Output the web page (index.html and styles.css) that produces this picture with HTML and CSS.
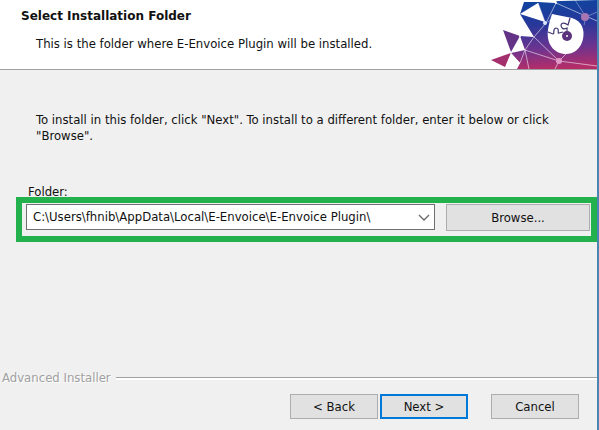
FILE: index.html
```html
<!DOCTYPE html>
<html lang="en">
<head>
<meta charset="UTF-8">
<title>E-Envoice Plugin Setup</title>
<link rel="stylesheet" href="styles.css">
</head>
<body>

<form class="wizard">
	<header class="banner">
		<div class="banner-text">
			<h1>Select Installation Folder</h1>
			<p>This is the folder where E-Envoice Plugin will be installed.</p>
		</div>
		<svg class="logo" width="107" height="69" viewBox="0 0 107 69" aria-hidden="true">
			<defs>
				<linearGradient id="sky" gradientUnits="userSpaceOnUse" x1="50" y1="0" x2="54" y2="69">
					<stop offset="0" stop-color="#0f459f"/>
					<stop offset=".35" stop-color="#27379a"/>
					<stop offset=".7" stop-color="#6c3490"/>
					<stop offset="1" stop-color="#b52d68"/>
				</linearGradient>
			</defs>
			<path d="M34 2L107 0V69H27L30 63L21 53L35 50L30 36L44 37L30 14Z" fill="url(#sky)"/>
			<path d="M13 30L30 36L21 52Z" fill="#633387"/>
			<path d="M1 60L21 53L15 67Z" fill="#a32f6c"/>
			<!-- light facets -->
			<path d="M30 14L48 3L55 22Z" fill="#fff"/>
			<path d="M34 0H68L65 3L48 2L34 2Z" fill="#fff"/>
			<path d="M21 53L30 63L26 69H15Z" fill="#fff"/>
			<g fill="none" stroke="#fff" stroke-width="1">
				<path d="M44 37L35 50M48 3L55 22M44 37L56 23L66 3M66 3L107 21M44 37L69 61L35 50L39 69M35 50L30 63M69 61L78 52M69 61L107 66M69 61L65 69" stroke-opacity=".55"/>
				<path d="M85 0L96 17L94 25M96 17L107 12M56 23L62 19" stroke-opacity=".35"/>
			</g>
			<path d="M62 14L82 18C92 21 95 30 93 39C91 49 83 55 74 54C65 53 59 46 58 38C57 31 59 23 62 14Z" fill="#fff"/>
			<circle cx="77" cy="36" r="5" fill="#5b317e"/>
			<circle cx="77" cy="36" r="1" fill="#fff"/>
			<path d="M58 32L63 34C65 34 62 29 66 28C70 28 67 34 69 33L73 32M77 31V28C73 30 71 28 71 25C72 22 75 23 78 25L80 18" fill="none" stroke="#42366f" stroke-width="1.2"/>
			<circle cx="95" cy="17" r="4" fill="#a976b4"/>
			<circle cx="69" cy="61" r="3" fill="#e29bc9"/>
			<circle cx="55" cy="23" r="2" fill="#dce4ff"/>
			<circle cx="66" cy="3" r="1" fill="#fff"/>
			<circle cx="30" cy="36" r="1" fill="#fff"/>
		</svg>
	</header>

	<main class="content">
		<p class="intro">To install in this folder, click "Next". To install to a different folder, enter it below or click "Browse".</p>

		<label class="folder-label" for="folder">Folder:</label>
		<div class="folder-row">
			<div class="combo">
				<select id="folder">
					<option>C:\Users\fhnib\AppData\Local\E-Envoice\E-Envoice Plugin\</option>
				</select>
				<svg class="arrow" width="12" height="8" viewBox="0 0 12 8" aria-hidden="true">
					<path d="M1 1L6 6L11 1" fill="none" stroke="#666" stroke-width="1.3"/>
				</svg>
			</div>
			<button type="button" class="btn btn-browse">Browse...</button>
		</div>
	</main>

	<footer class="bottom">
		<div class="brand"><span>Advanced Installer</span></div>
		<div class="buttons">
			<button type="button" class="btn">&lt; Back</button>
			<button type="submit" class="btn btn-default">Next &gt;</button>
			<button type="button" class="btn btn-cancel">Cancel</button>
		</div>
	</footer>
</form>

</body>
</html>
```
FILE: styles.css
```css
* {
	box-sizing: border-box;
}
body {
	margin: 0;
	background-color: #f0f0f0;
	color: #111;
	font-family: "DejaVu Sans Condensed", "DejaVu Sans", sans-serif;
	font-size: 13px;
	line-height: 16px;
}
h1, p {
	margin: 0;
}
.wizard {
	display: flex;
	flex-direction: column;
	min-height: 100vh;
	border-right: 2px solid #4a86b4;
}

/* header */
.banner {
	display: flex;
	justify-content: space-between;
	background-color: #fff;
	border-bottom: 1px solid #a0a0a0;
}
.banner-text {
	padding: 8px 0 0 21px;
}
.banner-text h1 {
	font-family: "DejaVu Sans", sans-serif;
	font-size: 12px;
	line-height: 16px;
}
.banner-text p {
	padding: 12px 0 0 15px;
}
.logo {
	display: block;
	flex: none;
}

/* body */
.content {
	flex: 1;
	padding: 42px 0 0 16px;
}
.intro {
	padding: 0 40px 0 20px;
}
.folder-label {
	display: block;
	padding: 42px 0 0 12px;
	line-height: 11px;
}
.folder-row {
	position: relative;
	display: flex;
	gap: 11px;
	border: 6px solid #22b14c;
	padding: 1px 1px 5px 4px;
}
.combo {
	position: relative;
	flex: 1;
}
.combo select {
	display: block;
	width: 100%;
	height: 26px;
	padding: 0 24px 0 6px;
	appearance: none;
	border: 1px solid #707070;
	border-radius: 0;
	background-color: #fff;
	color: #111;
	font: inherit;
}
.arrow {
	position: absolute;
	top: 10px;
	right: 5px;
	pointer-events: none;
}

/* buttons */
.btn {
	width: 88px;
	height: 25px;
	padding: 0;
	border: 1px solid #adadad;
	background-color: #e1e1e1;
	color: #111;
	font: inherit;
}
.btn-browse {
	width: 144px;
	height: 27px;
}
.btn-default {
	border: 2px solid #0078d7;
}

/* footer */
.brand {
	display: flex;
	align-items: center;
	gap: 5px;
	padding-left: 2px;
	color: #a0a0a0;
	text-shadow: 1px 1px #fff;
}
.brand::after {
	content: "";
	flex: 1;
	height: 2px;
	border-top: 1px solid #a0a0a0;
	background-color: #fff;
}
.buttons {
	display: flex;
	justify-content: flex-end;
	gap: 2px;
	padding: 8px 18px 11px 0;
}
.btn-cancel {
	margin-left: 21px;
}
```
